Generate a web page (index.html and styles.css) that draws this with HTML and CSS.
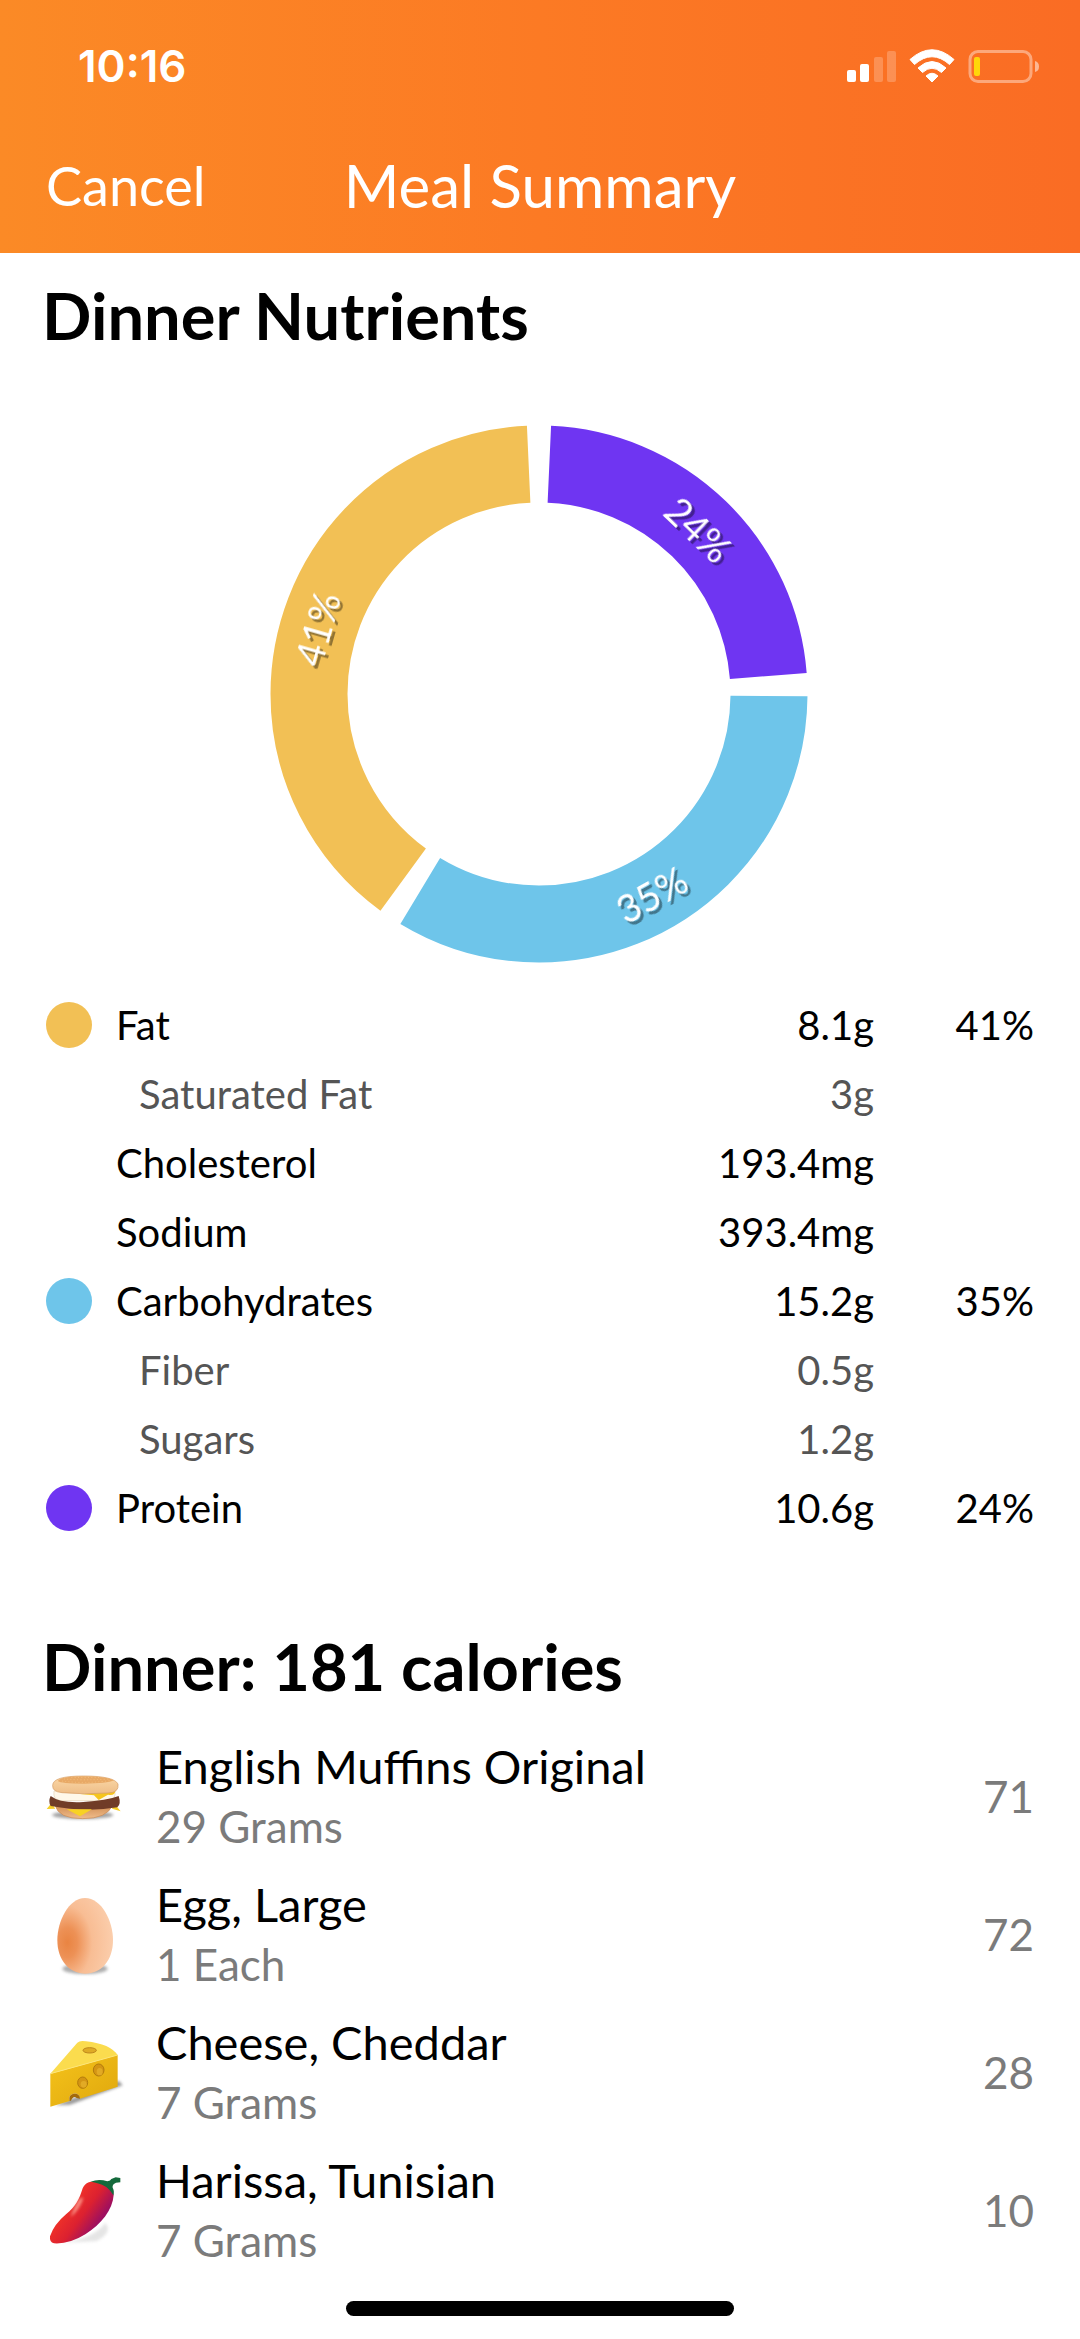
FILE: index.html
```html
<!DOCTYPE html>
<html lang="en">
<head>
  <meta charset="UTF-8">
  <meta name="viewport" content="width=device-width, initial-scale=1">
  <title>Meal Summary</title>
  <link rel="stylesheet" href="styles.css">
</head>
<body>
  <header class="header">
    <div class="status-bar">
      <span class="time">10:16</span>
      <svg class="status-icons" width="196" height="36" viewBox="845 48 196 36" aria-hidden="true">
        <!-- signal -->
        <g fill="#fff">
          <rect x="847" y="70" width="9" height="12" rx="2"/>
          <rect x="860" y="64" width="9" height="18" rx="2"/>
          <rect x="874" y="57" width="9" height="25" rx="2" opacity=".22"/>
          <rect x="887" y="51" width="9" height="31" rx="2" opacity=".22"/>
        </g>
        <!-- wifi -->
        <g fill="#fff">
          <path d="M910 59.500Q932 40 954 59.500L949.500 64.500Q932 49 914.500 64.500Z" stroke="#fff" stroke-linejoin="round"/>
          <path d="M918 68Q932 55 946 68L941.500 72.500Q932 64 922.500 72.500Z" stroke="#fff" stroke-linejoin="round"/>
          <path d="M926 76Q932 70.500 938 76L932 82Z" stroke="#fff" stroke-linejoin="round"/>
        </g>
        <!-- battery -->
        <rect x="970" y="51.500" width="61" height="30" rx="8" fill="none" stroke="#fff" stroke-width="3" opacity=".4"/>
        <rect x="974" y="57" width="6" height="19" rx="2" fill="#ffd60a"/>
        <path d="M1035 61Q1039 62 1039 66.500T1035 72Z" fill="#fff" opacity=".5"/>
      </svg>
    </div>
    <nav class="nav-bar">
      <button class="cancel" type="button">Cancel</button>
      <h1 class="title">Meal Summary</h1>
    </nav>
  </header>

  <main>
    <section>
      <h2>Dinner Nutrients</h2>

      <svg class="chart" viewBox="-269 -269 540 540" role="img" aria-label="Fat 41%, carbohydrates 35%, protein 24%">
        <g class="ring" transform="rotate(-90)">
          <circle r="230" pathLength="360" stroke="#6f35f2" stroke-dasharray="82.900 277.100" stroke-dashoffset="-2.600"/>
          <circle r="230" pathLength="360" stroke="#6ec5ea" stroke-dasharray="120.600 239.400" stroke-dashoffset="-90.500"/>
          <circle r="230" pathLength="360" stroke="#f2c055" stroke-dasharray="141.200 218.800" stroke-dashoffset="-216.200"/>
        </g>
        <g class="ring-labels">
          <text transform="translate(159 -164) rotate(44)" y="14">24%</text>
          <text transform="translate(113 201) rotate(-29)" y="14">35%</text>
          <text transform="translate(-221 -65) rotate(-74)" y="14">41%</text>
        </g>
      </svg>

      <table class="nutrients">
        <tbody>
          <tr>
            <td class="key"><span class="dot fat"></span></td>
            <th scope="row">Fat</th>
            <td class="amount">8.1g</td>
            <td class="percent">41%</td>
          </tr>
          <tr class="sub">
            <td class="key"></td>
            <th scope="row">Saturated Fat</th>
            <td class="amount">3g</td>
            <td class="percent"></td>
          </tr>
          <tr>
            <td class="key"></td>
            <th scope="row">Cholesterol</th>
            <td class="amount">193.4mg</td>
            <td class="percent"></td>
          </tr>
          <tr>
            <td class="key"></td>
            <th scope="row">Sodium</th>
            <td class="amount">393.4mg</td>
            <td class="percent"></td>
          </tr>
          <tr>
            <td class="key"><span class="dot carbs"></span></td>
            <th scope="row">Carbohydrates</th>
            <td class="amount">15.2g</td>
            <td class="percent">35%</td>
          </tr>
          <tr class="sub">
            <td class="key"></td>
            <th scope="row">Fiber</th>
            <td class="amount">0.5g</td>
            <td class="percent"></td>
          </tr>
          <tr class="sub">
            <td class="key"></td>
            <th scope="row">Sugars</th>
            <td class="amount">1.2g</td>
            <td class="percent"></td>
          </tr>
          <tr>
            <td class="key"><span class="dot protein"></span></td>
            <th scope="row">Protein</th>
            <td class="amount">10.6g</td>
            <td class="percent">24%</td>
          </tr>
        </tbody>
      </table>
    </section>

    <section class="meal">
      <h2>Dinner: 181 calories</h2>
      <ul class="foods">
        <li>
          <svg class="food-icon" viewBox="0 3 330 330" aria-hidden="true">
            <defs>
              <filter id="soft" x="-30%" y="-80%" width="160%" height="260%"><feGaussianBlur stdDeviation="5"/></filter>
              <linearGradient id="bun" x1="0" y1="0" x2="0" y2="1">
                <stop offset="0" stop-color="#fbd9a8"/><stop offset="1" stop-color="#eebd88"/>
              </linearGradient>
              <linearGradient id="bottomBun" x1="0" y1="0" x2="0" y2="1">
                <stop offset="0" stop-color="#cf8b52"/><stop offset="1" stop-color="#f0bd8b"/>
              </linearGradient>
            </defs>
            <ellipse cx="158" cy="225" rx="92" ry="12" fill="#555" opacity=".55" filter="url(#soft)"/>
            <path d="M75 195Q85 236 158 236T248 195Z" fill="url(#bottomBun)" stroke="#c98a55" stroke-width="2"/>
            <path d="M50 207L64 190L76 206ZM252 190L272 214L246 206Z" fill="#f6cf28"/>
            <path d="M72 153Q68 180 92 182H238Q260 178 254 150Z" fill="#fff8ea" stroke="#e6d5b8" stroke-width="2"/>
            <path d="M150 162L256 154Q254 168 234 164L206 180L192 166Z" fill="#f5c51e"/>
            <path d="M62 168Q90 190 160 186T266 168Q274 192 262 202Q170 218 62 198Q54 184 62 168Z" fill="#703c27"/>
            <path d="M110 208L186 208L150 229Z" fill="#f8d224"/>
            <path d="M68 136Q68 108 160 108T264 132Q268 158 234 159Q160 164 96 158Q66 155 68 136Z" fill="url(#bun)" stroke="#d49b63" stroke-width="2"/>
            <path d="M83 123Q94 109 160 109T252 121Q232 131 162 131T83 123Z" fill="#e8a966"/>
            <g fill="none" stroke="#f6c07e" stroke-width="3" stroke-dasharray="3 7">
              <path d="M96 123Q160 132 240 122M102 117Q160 122 236 117M124 112H214"/>
            </g>
          </svg>
          <div class="food">
            <span class="name">English Muffins Original</span>
            <span class="serving">29 Grams</span>
          </div>
          <span class="calories">71</span>
        </li>
        <li>
          <svg class="food-icon" viewBox="0 -3 330 330" aria-hidden="true">
            <defs>
              <radialGradient id="shell" gradientUnits="userSpaceOnUse" cx="112" cy="188" r="135" gradientTransform="translate(0 -94) scale(1 1.500)">
                <stop offset="0" stop-color="#e98442"/><stop offset=".22" stop-color="#ed9156"/>
                <stop offset=".55" stop-color="#f8bd94"/><stop offset="1" stop-color="#fbcdab"/>
              </radialGradient>
            </defs>
            <ellipse cx="165" cy="266" rx="68" ry="16" fill="#777" opacity=".6" filter="url(#soft)"/>
            <path d="M165 54C215 54 249 124 249 180C249 242 213 281 166 281S82 242 82 180C82 124 116 54 165 54Z" fill="url(#shell)"/>
          </svg>
          <div class="food">
            <span class="name">Egg, Large</span>
            <span class="serving">1 Each</span>
          </div>
          <span class="calories">72</span>
        </li>
        <li>
          <svg class="food-icon" viewBox="0 -9 330 330" aria-hidden="true">
            <defs>
              <linearGradient id="cheeseSide" x1="0" y1="0" x2="1" y2="1">
                <stop offset="0" stop-color="#f5c31b"/><stop offset="1" stop-color="#dfa70d"/>
              </linearGradient>
            </defs>
            <path d="M75 256L266 182L278 196L120 254Z" fill="#555" opacity=".6" filter="url(#soft)"/>
            <path d="M61 161L142 68Q150 60 168 64Q242 72 263 106Z" fill="#fbdc4e"/>
            <path d="M61 161L263 105V200L150 236Q148 219 130 221Q114 225 119 243L61 260Z" fill="url(#cheeseSide)"/>
            <path d="M61 161L263 105" stroke="#fde67a" stroke-width="3"/>
            <path d="M119 243Q114 225 130 221Q148 219 150 236L140 234Q130 226 123 242Z" fill="#a46a0a"/>
            <ellipse cx="179" cy="91" rx="20" ry="8" fill="#dfab25" stroke="#bd861b" stroke-width="3"/>
            <g fill="#d49514" stroke="#b27a0c" stroke-width="3">
              <ellipse cx="158" cy="188" rx="15" ry="17"/>
              <ellipse cx="206" cy="150" rx="16" ry="18"/>
            </g>
            <g fill="#e2aa25">
              <ellipse cx="161" cy="193" rx="9" ry="10"/>
              <ellipse cx="209" cy="155" rx="9" ry="11"/>
            </g>
          </svg>
          <div class="food">
            <span class="name">Cheese, Cheddar</span>
            <span class="serving">7 Grams</span>
          </div>
          <span class="calories">28</span>
        </li>
        <li>
          <svg class="food-icon" viewBox="0 18 330 330" aria-hidden="true">
            <defs>
              <linearGradient id="pepper" gradientUnits="userSpaceOnUse" x1="120" y1="160" x2="205" y2="222">
                <stop offset="0" stop-color="#f03128"/><stop offset=".5" stop-color="#dc2130"/><stop offset="1" stop-color="#9d0f60"/>
              </linearGradient>
            </defs>
            <path d="M90 282Q190 270 226 222Q250 250 200 276Z" fill="#999" opacity=".25" filter="url(#soft)"/>
            <path d="M182 98Q166 100 158 118C148 150 138 172 108 196Q72 226 60 262Q58 280 72 283Q118 286 166 256C214 226 248 182 251 138Q248 106 220 100Z" fill="url(#pepper)"/>
            <path d="M160 146Q150 180 122 204Q134 170 150 148Z" fill="#ffb4a4" opacity=".75" filter="url(#soft)"/>
            <path d="M182 98Q206 88 232 97Q242 96 244 90L257 85L271 87V100L258 101Q246 106 248 116Q254 126 250 139Q238 118 222 110Q208 102 182 98Z" fill="#146a3c"/>
          </svg>
          <div class="food">
            <span class="name">Harissa, Tunisian</span>
            <span class="serving">7 Grams</span>
          </div>
          <span class="calories">10</span>
        </li>
      </ul>
    </section>
  </main>

  <div class="home-indicator"></div>
</body>
</html>
```
FILE: styles.css
```css
* {
  box-sizing: border-box;
}
body {
  margin: 0;
  background: #fff;
  color: #000;
  font-family: Lato, "Open Sans", sans-serif;
  font-size: 40px;
}

/* header */
.header {
  padding-bottom: 15px;
  background: linear-gradient(to right, #fb8a26, #fc7a24 50%, #fa6c24);
  color: #fff;
}
.status-bar {
  display: flex;
  align-items: center;
  justify-content: space-between;
  height: 132px;
  padding: 0 39px 0 78px;
}
.time {
  font-family: Inter, sans-serif;
  font-size: 44px;
  font-weight: 600;
}
.nav-bar {
  display: grid;
  grid-template-columns: 1fr auto 1fr;
  align-items: center;
  height: 106px;
  padding: 0 46px;
}
.cancel {
  justify-self: start;
  padding: 0;
  border: 0;
  background: none;
  color: inherit;
  font-family: inherit;
  font-size: 54px;
  cursor: pointer;
}
.title {
  margin: 0;
  font-size: 60px;
  font-weight: 400;
}

h2 {
  margin: 0;
  padding: 0 42px;
  font-size: 65px;
  font-weight: 700;
  line-height: 72px;
}
main {
  padding-top: 26px;
}

/* chart */
.chart {
  display: block;
  width: 50%;
  margin: 74px auto 25px;
}
.ring circle {
  fill: none;
  stroke-width: 77px;
}
.ring-labels {
  fill: #fff;
  font-size: 38px;
  text-anchor: middle;
  filter: drop-shadow(3px 3px 0 rgba(0, 0, 0, 0.4));
}

/* nutrient table */
.nutrients {
  width: 100%;
  padding: 0 46px;
  border-spacing: 0;
}
.nutrients td,
.nutrients th {
  height: 69px;
  padding: 0;
  font-weight: 400;
  text-align: left;
}
.nutrients .key {
  width: 70px;
}
.nutrients .amount {
  text-align: right;
}
.nutrients .percent {
  width: 160px;
  text-align: right;
}
.nutrients .sub {
  color: #555;
}
.nutrients .sub th {
  padding-left: 23px;
}
.dot {
  display: block;
  width: 46px;
  height: 46px;
  border-radius: 50%;
}
.fat {
  background: #f2c055;
}
.carbs {
  background: #6ec5ea;
}
.protein {
  background: #6f35f2;
}

/* food list */
.meal {
  margin-top: 88px;
}
.foods {
  margin: 25px 0 0;
  padding: 0 46px 0 30px;
  list-style: none;
}
.foods li {
  display: flex;
  align-items: center;
  gap: 16px;
  padding: 9px 0;
}
.food-icon {
  width: 110px;
  height: 110px;
  margin: -5px 0;
}
.food {
  display: flex;
  flex: 1;
  flex-direction: column;
  line-height: 60px;
}
.name {
  font-size: 47px;
}
.serving {
  color: #7b7b7b;
  font-size: 44px;
}
.calories {
  color: #7b7b7b;
  font-size: 44px;
}

.home-indicator {
  width: 36%;
  height: 15px;
  margin: 22px auto 23px;
  border-radius: 8px;
  background: #000;
}
```
